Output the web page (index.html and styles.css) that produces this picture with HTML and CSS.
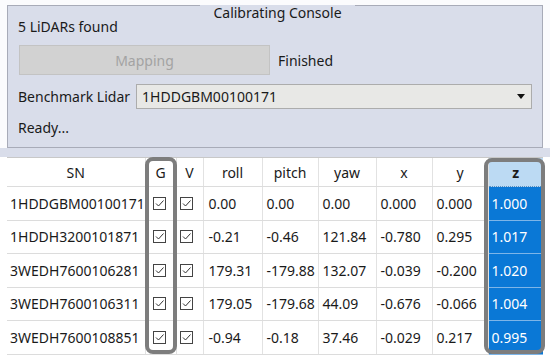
FILE: index.html
```html
<!DOCTYPE html>
<html>
<head>
<meta charset="utf-8">
<link rel="stylesheet" href="styles.css">
</head>
<body>
<div class="top">
  <div class="group">
    <div class="group-head">
      <div class="seg seg-left"></div>
      <div class="group-title">Calibrating Console</div>
      <div class="seg seg-right"></div>
    </div>
    <div class="group-body">
      <div class="line found">5 LiDARs found</div>
      <div class="btn-row">
        <div class="btn">Mapping</div>
        <span class="status">Finished</span>
      </div>
      <div class="combo-row">
        <span class="combo-label">Benchmark Lidar</span>
        <div class="combo">
          <span>1HDDGBM00100171</span>
          <svg class="arrow" width="8" height="5" viewBox="0 0 8 5"><path d="M0 0 H8 L4 5 Z" fill="#111"/></svg>
        </div>
      </div>
      <div class="line ready">Ready...</div>
    </div>
  </div>
  <div class="strip"></div>
</div>
<div class="table-wrap">
  <table class="grid">
    <colgroup>
      <col class="c-sn"><col class="c-g"><col class="c-v"><col class="c-roll"><col class="c-pitch"><col class="c-yaw"><col class="c-x"><col class="c-y"><col class="c-z">
    </colgroup>
    <thead>
      <tr><th>SN</th><th>G</th><th>V</th><th>roll</th><th>pitch</th><th>yaw</th><th>x</th><th>y</th><th class="zh">z</th></tr>
    </thead>
    <tbody>
      <tr><td>1HDDGBM00100171</td><td class="cg"><svg class="cb" width="13" height="13" viewBox="0 0 13 13"><rect x="0.5" y="0.5" width="12" height="12" fill="#fff" stroke="#444"/><path d="M3 6.5 L5.5 9 L10.5 3.5" fill="none" stroke="#333" stroke-width="1"/></svg></td><td class="cv"><svg class="cb" width="13" height="13" viewBox="0 0 13 13"><rect x="0.5" y="0.5" width="12" height="12" fill="#fff" stroke="#444"/><path d="M3 6.5 L5.5 9 L10.5 3.5" fill="none" stroke="#333" stroke-width="1"/></svg></td><td>0.00</td><td>0.00</td><td>0.00</td><td>0.000</td><td>0.000</td><td class="zc">1.000</td></tr>
      <tr><td>1HDDH3200101871</td><td class="cg"><svg class="cb" width="13" height="13" viewBox="0 0 13 13"><rect x="0.5" y="0.5" width="12" height="12" fill="#fff" stroke="#444"/><path d="M3 6.5 L5.5 9 L10.5 3.5" fill="none" stroke="#333" stroke-width="1"/></svg></td><td class="cv"><svg class="cb" width="13" height="13" viewBox="0 0 13 13"><rect x="0.5" y="0.5" width="12" height="12" fill="#fff" stroke="#444"/><path d="M3 6.5 L5.5 9 L10.5 3.5" fill="none" stroke="#333" stroke-width="1"/></svg></td><td>-0.21</td><td>-0.46</td><td>121.84</td><td>-0.780</td><td>0.295</td><td class="zc">1.017</td></tr>
      <tr><td>3WEDH7600106281</td><td class="cg"><svg class="cb" width="13" height="13" viewBox="0 0 13 13"><rect x="0.5" y="0.5" width="12" height="12" fill="#fff" stroke="#444"/><path d="M3 6.5 L5.5 9 L10.5 3.5" fill="none" stroke="#333" stroke-width="1"/></svg></td><td class="cv"><svg class="cb" width="13" height="13" viewBox="0 0 13 13"><rect x="0.5" y="0.5" width="12" height="12" fill="#fff" stroke="#444"/><path d="M3 6.5 L5.5 9 L10.5 3.5" fill="none" stroke="#333" stroke-width="1"/></svg></td><td>179.31</td><td>-179.88</td><td>132.07</td><td>-0.039</td><td>-0.200</td><td class="zc">1.020</td></tr>
      <tr><td>3WEDH7600106311</td><td class="cg"><svg class="cb" width="13" height="13" viewBox="0 0 13 13"><rect x="0.5" y="0.5" width="12" height="12" fill="#fff" stroke="#444"/><path d="M3 6.5 L5.5 9 L10.5 3.5" fill="none" stroke="#333" stroke-width="1"/></svg></td><td class="cv"><svg class="cb" width="13" height="13" viewBox="0 0 13 13"><rect x="0.5" y="0.5" width="12" height="12" fill="#fff" stroke="#444"/><path d="M3 6.5 L5.5 9 L10.5 3.5" fill="none" stroke="#333" stroke-width="1"/></svg></td><td>179.05</td><td>-179.68</td><td>44.09</td><td>-0.676</td><td>-0.066</td><td class="zc">1.004</td></tr>
      <tr><td>3WEDH7600108851</td><td class="cg"><svg class="cb" width="13" height="13" viewBox="0 0 13 13"><rect x="0.5" y="0.5" width="12" height="12" fill="#fff" stroke="#444"/><path d="M3 6.5 L5.5 9 L10.5 3.5" fill="none" stroke="#333" stroke-width="1"/></svg></td><td class="cv"><svg class="cb" width="13" height="13" viewBox="0 0 13 13"><rect x="0.5" y="0.5" width="12" height="12" fill="#fff" stroke="#444"/><path d="M3 6.5 L5.5 9 L10.5 3.5" fill="none" stroke="#333" stroke-width="1"/></svg></td><td>-0.94</td><td>-0.18</td><td>37.46</td><td>-0.029</td><td>0.217</td><td class="zc">0.995</td></tr>
    </tbody>
  </table>
  <div class="hl hl-g"></div>
  <div class="hl hl-z"></div>
</div>
</body>
</html>
```

FILE: styles.css
```css
* { box-sizing: border-box; }
html, body {
  margin: 0;
  padding: 0;
  background: #ffffff;
  width: 550px;
  height: 359px;
  overflow: hidden;
  font-family: "Noto Sans", "Open Sans", sans-serif;
  color: #1a1a1a;
}
.top {
  padding-top: 5px;
  background: #fbfbfd;
}
.group {
  margin: 0 7px;
  background: #d9ddea;
}
.group-head {
  display: flex;
  height: 15px;
}
.seg {
  border-top: 1px solid #a8abb8;
}
.seg-left {
  flex: 0 0 193px;
  border-left: 1px solid #a8abb8;
}
.seg-right {
  flex: 1;
  border-right: 1px solid #a8abb8;
}
.group-title {
  flex: 0 0 155px;
  text-align: center;
  font-size: 14px;
  line-height: 14px;
  padding-top: 1px;
  white-space: nowrap;
}
.group-body {
  border-left: 1px solid #a8abb8;
  border-right: 1px solid #a8abb8;
  border-bottom: 1px solid #a8abb8;
  padding: 0 10px 12px 10px;
  font-size: 14px;
}
.line {
  line-height: 14px;
}
.btn-row {
  display: flex;
  align-items: center;
  margin-top: 11px;
  gap: 8px;
}
.btn {
  margin-left: 1px;
  width: 251px;
  height: 30px;
  background: #d2d2d2;
  border: 1px solid #c3c3c3;
  color: #a3a3a3;
  font-size: 14px;
  display: flex;
  align-items: center;
  justify-content: center;
}
.status { color: #1a1a1a; }
.combo-row {
  display: flex;
  align-items: center;
  margin-top: 9px;
  gap: 6px;
}
.combo {
  flex: 1;
  height: 25px;
  background: #e8e8e6;
  border: 1px solid #acacac;
  display: flex;
  align-items: center;
  justify-content: space-between;
  padding: 0 6px 0 5px;
}
.arrow { display: block; }
.ready { margin-top: 12px; }
.strip {
  height: 9px;
  background: #d9ddea;
}
.table-wrap {
  position: relative;
}
.grid {
  margin-left: 7px;
  border-collapse: collapse;
  table-layout: fixed;
  width: 536px;
  font-size: 14px;
}
.c-sn { width: 138px; }
.c-g { width: 31px; }
.c-v { width: 27px; }
.c-roll { width: 59px; }
.c-pitch { width: 56px; }
.c-yaw { width: 58px; }
.c-x { width: 56px; }
.c-y { width: 56px; }
.c-z { width: 55px; }
.grid th {
  height: 29px;
  font-weight: normal;
  text-align: center;
  border-top: 1px solid #c8c8c8;
  border-left: 1px solid #e2e2e2;
  border-bottom: 1px solid #dcdcdc;
  padding: 0;
  color: #1a1a1a;
}
.grid th.zh {
  background: #bcdaf3;
  font-weight: bold;
  border-bottom: 1px dotted #5a8fc0;
}
.grid td {
  height: 33.5px;
  border-bottom: 1px solid #dcdcdc;
  border-left: 1px solid #e2e2e2;
  padding: 0 0 0 4px;
  white-space: nowrap;
  overflow: hidden;
  color: #1a1a1a;
}
.grid th:first-child, .grid td:first-child { border-left: none; }
.grid td:first-child { padding-left: 3px; }
.grid td:nth-child(4) { padding-left: 5px; }
.grid td.cg { padding-left: 7px; }
.grid td.cv { padding-left: 3px; }
.cb { display: block; }
.grid td.zc {
  background: #0a78d6;
  color: #ffffff;
  border-bottom: 1px solid #7db5e8;
  padding-left: 3px;
}
.hl {
  position: absolute;
  border: 4px solid #7d7d7d;
  border-radius: 8px;
  pointer-events: none;
}
.hl-g {
  left: 145px;
  top: 0;
  width: 32px;
  height: 197px;
}
.hl-z {
  left: 484px;
  top: 1px;
  width: 61px;
  height: 196px;
}
```
